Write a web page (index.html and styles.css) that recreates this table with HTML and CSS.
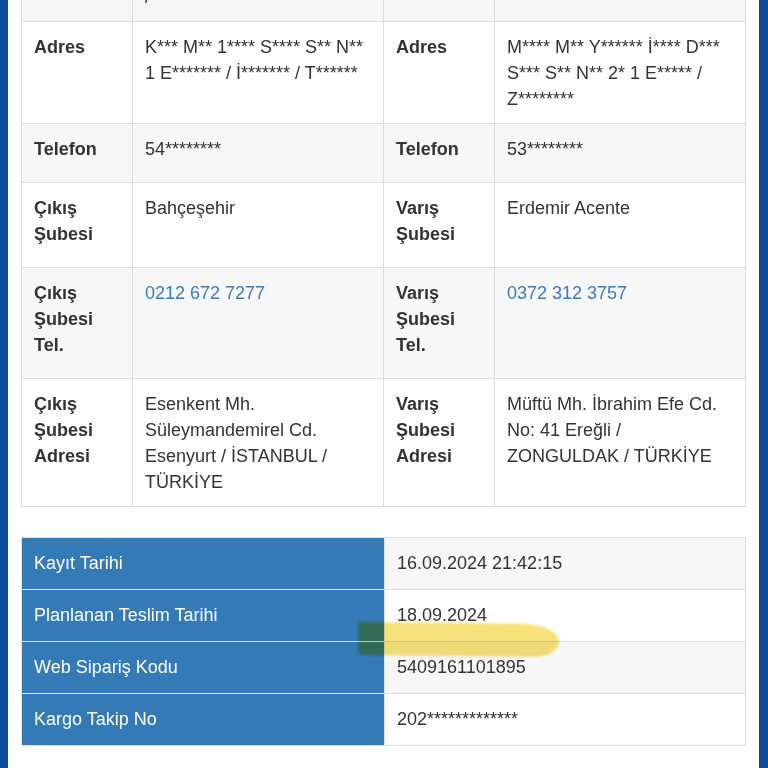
FILE: index.html
```html
<!DOCTYPE html>
<html lang="tr">
<head>
<meta charset="utf-8">
<title>Gönderi Detayı</title>
<link rel="stylesheet" href="styles.css">
</head>
<body>
<div class="screen">
  <div class="bar bar-left"></div>
  <main class="content">
    <table class="info">
      <colgroup>
        <col class="c-label"><col class="c-value"><col class="c-label"><col class="c-value">
      </colgroup>
      <tr class="odd">
        <th>İlçe</th><td>K******* / İ*******<br>/</td>
        <th>İlçe</th><td>E***** / Z********</td>
      </tr>
      <tr>
        <th>Adres</th><td>K*** M** 1**** S**** S** N** 1 E******* / İ******* / T******</td>
        <th>Adres</th><td>M**** M** Y****** İ**** D*** S*** S** N** 2* 1 E***** / Z********</td>
      </tr>
      <tr class="odd">
        <th>Telefon</th><td>54********</td>
        <th>Telefon</th><td>53********</td>
      </tr>
      <tr>
        <th>Çıkış Şubesi</th><td>Bahçeşehir</td>
        <th>Varış Şubesi</th><td>Erdemir Acente</td>
      </tr>
      <tr class="odd">
        <th>Çıkış Şubesi Tel.</th><td><a class="phone" href="#">0212 672 7277</a></td>
        <th>Varış Şubesi Tel.</th><td><a class="phone" href="#">0372 312 3757</a></td>
      </tr>
      <tr>
        <th>Çıkış Şubesi Adresi</th><td>Esenkent Mh. Süleymandemirel Cd. Esenyurt / İSTANBUL / TÜRKİYE</td>
        <th>Varış Şubesi Adresi</th><td>Müftü Mh. İbrahim Efe Cd. No: 41 Ereğli / ZONGULDAK / TÜRKİYE</td>
      </tr>
    </table>

    <div class="summary-wrap">
      <table class="summary">
        <tr class="odd"><td class="key">Kayıt Tarihi</td><td class="val">16.09.2024 21:42:15</td></tr>
        <tr><td class="key">Planlanan Teslim Tarihi</td><td class="val">18.09.2024</td></tr>
        <tr class="odd"><td class="key">Web Sipariş Kodu</td><td class="val">5409161101895</td></tr>
        <tr><td class="key">Kargo Takip No</td><td class="val">202*************</td></tr>
      </table>
      <div class="highlight"></div>
    </div>
  </main>
  <div class="bar bar-right"></div>
</div>
</body>
</html>
```

FILE: styles.css
```css
* { box-sizing: border-box; }

html, body {
  margin: 0;
  padding: 0;
  background: #ffffff;
}

body {
  font-family: "Liberation Sans", Arial, Helvetica, sans-serif;
  font-size: 18px;
  line-height: 26px;
  color: #333333;
}

.screen {
  display: flex;
  width: 768px;
  height: 768px;
  overflow: hidden;
}

.bar {
  flex: none;
  background: #0b4c9b;
}
.bar-left { width: 8px; }
.bar-right { width: 9px; }

.content {
  flex: 1;
  padding: 0 13px;
  min-width: 0;
}

table {
  border-collapse: collapse;
  width: 100%;
  table-layout: fixed;
}

.info {
  margin-top: -55px;
}

.c-label { width: 111px; }

.info th,
.info td {
  border: 1px solid #dcdcdc;
  vertical-align: top;
  text-align: left;
  padding: 12px 12px 11px;
}

.info th {
  font-weight: bold;
  padding-bottom: 20px;
}

.info tr.odd th,
.info tr.odd td { background: #f7f7f7; }

.phone {
  color: #3a7bbf;
  text-decoration: none;
}

.summary-wrap {
  position: relative;
  margin-top: 30px;
}

.summary td {
  border: 1px solid #dcdcdc;
  padding: 12px 12px 13px;
  vertical-align: top;
}

.summary .key {
  width: 363px;
  background: #337ab7;
  color: #ffffff;
  border-color: #d9e4ef;
}

.summary tr.odd .val { background: #f7f7f7; }

.highlight {
  position: absolute;
  left: 337px;
  top: 86px;
  width: 201px;
  height: 33px;
  background: #f5dc62;
  opacity: 0.85;
  mix-blend-mode: multiply;
  border-radius: 3px 40px 26px 4px / 3px 18px 16px 6px;
  transform: rotate(0.6deg);
  filter: blur(1.2px);
}
```
